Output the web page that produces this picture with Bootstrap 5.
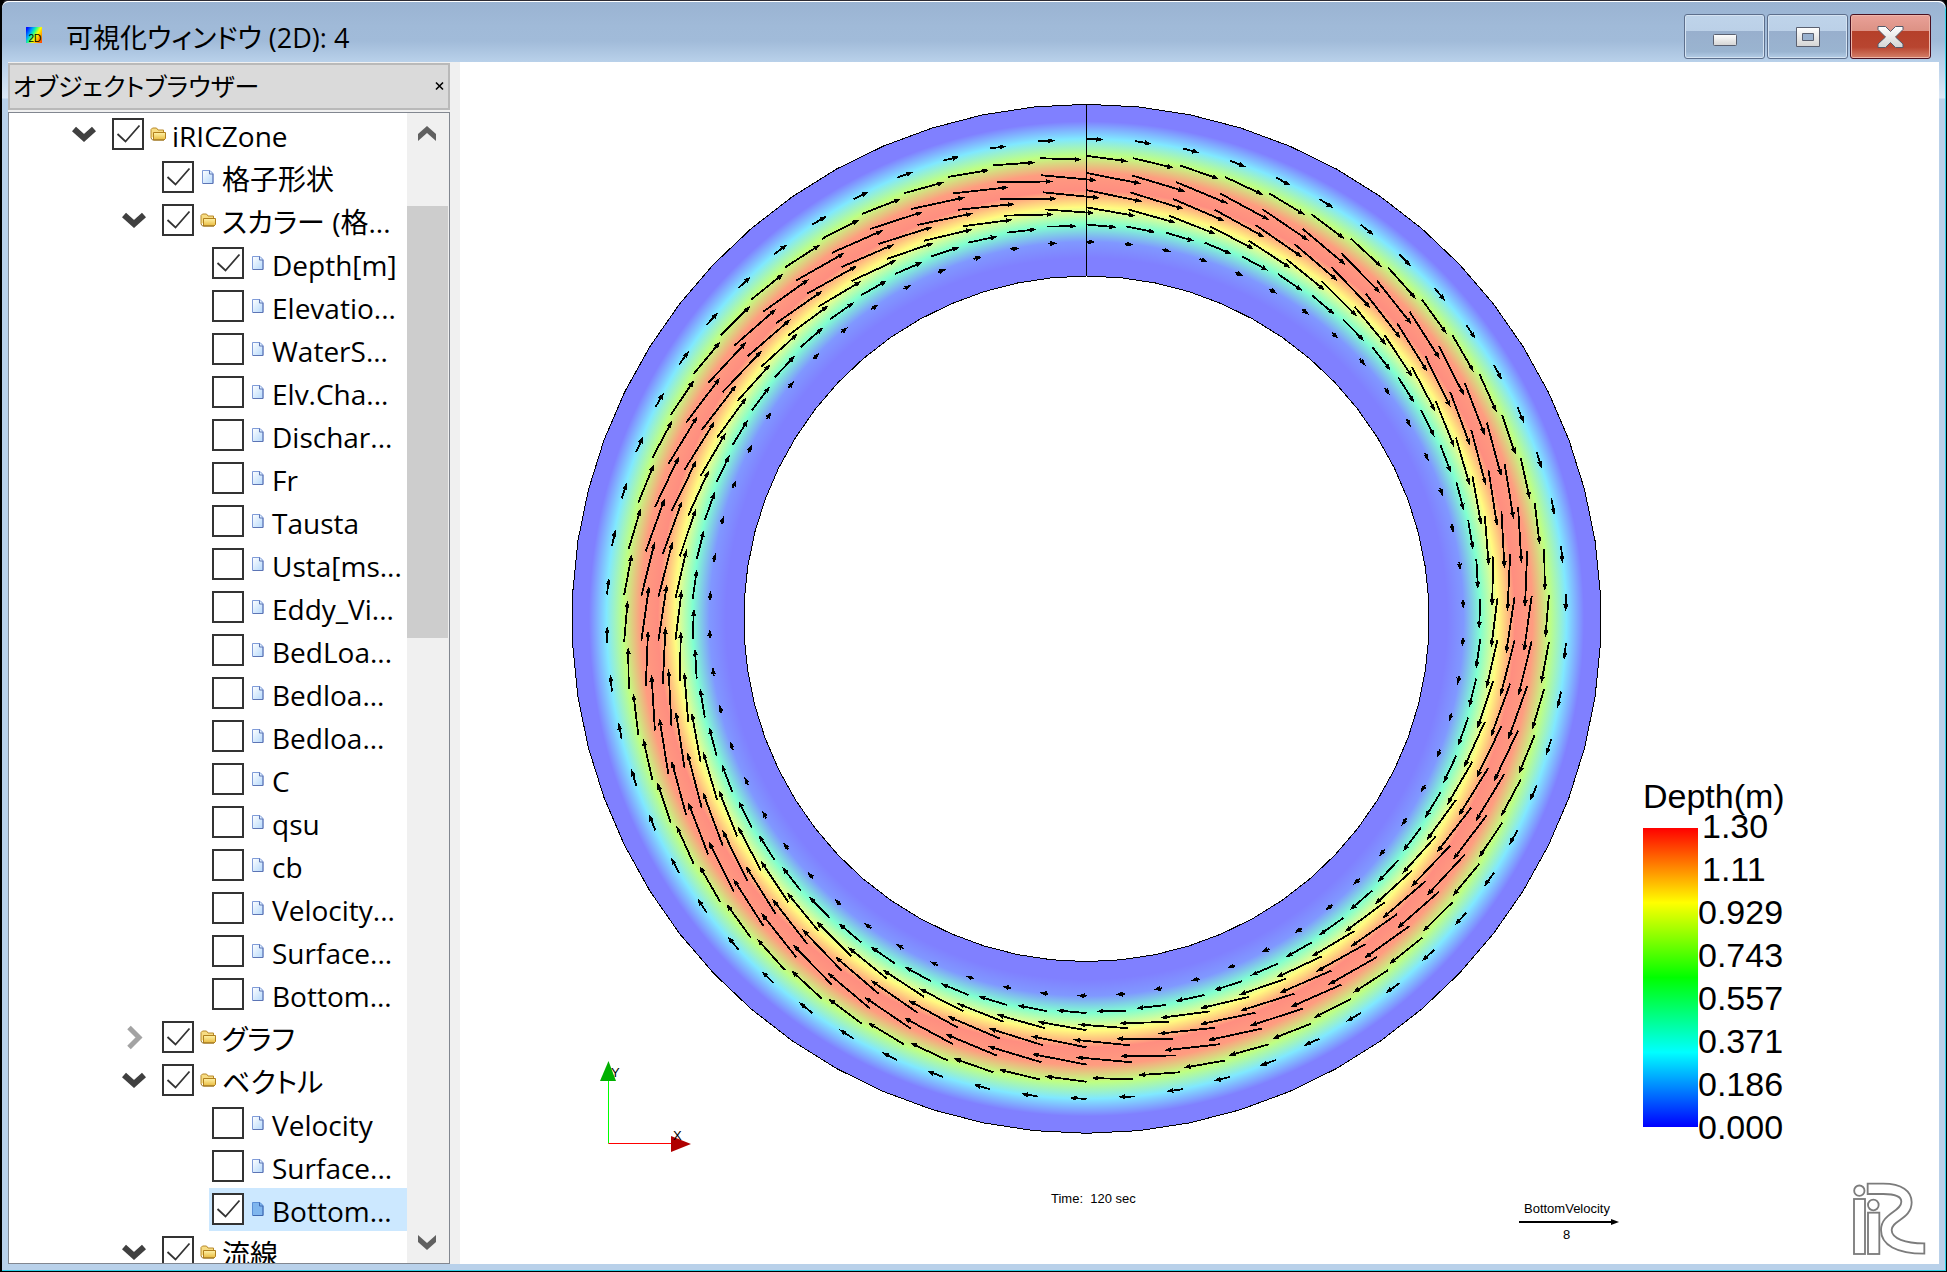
<!DOCTYPE html>
<html lang="ja">
<head>
<meta charset="utf-8">
<meta name="viewport" content="width=device-width, initial-scale=1">
<title>可視化ウィンドウ (2D): 4</title>
<link rel="stylesheet" href="https://cdn.jsdelivr.net/npm/bootstrap@5.3.0/dist/css/bootstrap.min.css">
<style>
body{font-family:"Open Sans","Noto Sans CJK JP",sans-serif;color:#000;font-feature-settings:"palt";background:#000}
.win{border:1px solid #000;border-left-width:2px;border-top-color:#2c2a33;border-top-left-radius:8px;border-top-right-radius:8px;background:linear-gradient(#b9d1ea 62px,#dbe8f6 97px,#b9d1ea 98px);box-shadow:inset 0 1px #fff,inset -1px -1px #2fd0e8}
.titlebar{height:61px;padding:9px 14px 0 24px;margin-right:1px;background:linear-gradient(#9ab3d2,#a0bad8 40%,#a1bbd9 65%,#b9d1ea);border-top:1px solid #fff;border-radius:7px 7px 0 0}
.title-ico{margin-bottom:3px}
.title-txt{font-size:27px;line-height:40px;margin-left:24px;padding-top:3px}
.wbtns{gap:2px}
.wbtn{width:81px;height:45px;padding:0;border:1px solid #5d6f8c;border-radius:3px;background:linear-gradient(#bfd4ea,#bbd0e7 38%,#98afcd 38%,#9ab4d0 85%,#b4cde6);box-shadow:inset 0 0 0 1px #d5e3f2}
.wbtn.shut{border-color:#4a1020;background:linear-gradient(#e9a198,#dc9184 38%,#b5402a 38%,#b84530 75%,#d47f69);box-shadow:inset 0 0 0 1px #edb5a9}
.client{margin:0 7px 7px 6px;background:#f0f0f0;min-height:0}
.dock{width:442px;margin:1px 10px 0 0}
.dock-head{height:47px;border:2px solid #b9b9b9;background:#dadada;padding:0 3px;margin-bottom:2px}
.dock-head h1{font-size:25px;line-height:36px}
.xbtn{width:14px;height:14px}
.tree{border:1px solid #828790;background:#fff;min-height:0}
.node{height:43px;font-size:28px;line-height:43px;white-space:nowrap}
.d0{padding-left:63px}.d1{padding-left:113px}.d2{padding-left:163px}
.exp{width:24px;height:43px;margin-right:16px;flex:none}
.chk{appearance:none;width:32px;height:32px;border:2px solid #333;background:#fff;flex:none;margin:0 0 1px}
.chk:checked{background:#fff url("data:image/svg+xml,%3Csvg xmlns='http://www.w3.org/2000/svg' viewBox='0 0 28 28'%3E%3Cpath d='M3.500 14l8 7.500L25.500 5.500' fill='none' stroke='%23333' stroke-width='1.800'/%3E%3C/svg%3E")}
.ico{width:16px;height:16px;margin:0 6px;flex:none}
.node label{padding-top:4px}
.picked{background:linear-gradient(90deg,transparent 200px,#cce8ff 200px)}
.sbar{width:42px;background:#f0f0f0}
.sbtn{height:40px;width:40px}
.thumb{width:41px;height:432px;margin-top:53px;background:#cdcdcd}
.scene{background:#fff;min-width:0}
.legend-box{right:154px;top:716px;width:142px;font-family:"Liberation Sans",sans-serif}
.legend-title{font-size:34px;line-height:36px;height:50px}
.ramp{width:55px;height:299px;background:linear-gradient(red,#ff0 25%,#0f0 50%,#0ff 75%,#00f)}
.ticks{font-size:34px;line-height:43px;margin-top:-23px}
.vtk{font-family:"Liberation Sans",sans-serif;font-size:13px}
</style>
<script src="https://cdn.jsdelivr.net/npm/bootstrap@5.3.0/dist/js/bootstrap.bundle.min.js"></script>
</head>
<body>
<svg width="0" height="0" class="position-absolute" aria-hidden="true">
 <defs>
  <linearGradient id="gf" x1="0" y1="0" x2="0" y2="1"><stop offset="0" stop-color="#fff3a8"/><stop offset="1" stop-color="#e8b93c"/></linearGradient>
  <linearGradient id="gp" x1="0" y1="0" x2="1" y2="1"><stop offset="0" stop-color="#fff"/><stop offset="1" stop-color="#b4d8fb"/></linearGradient>
  <linearGradient id="gb" x1="0" y1="0" x2="0" y2="1"><stop offset="0" stop-color="#fff"/><stop offset="1" stop-color="#d4d4d4"/></linearGradient>
  <linearGradient id="g2d" x1="0" y1=".2" x2="1" y2=".8"><stop offset="0" stop-color="#0010ff"/><stop offset=".25" stop-color="#00a0ff"/><stop offset=".42" stop-color="#20ff90"/><stop offset=".62" stop-color="#ff0"/><stop offset="1" stop-color="#ff5000"/></linearGradient>
 </defs>
 <symbol id="folder" viewBox="0 0 16 16"><path d="M1 12V3.500L2.500 2h4l1.500 2h5.500v2" fill="#f7dc83" stroke="#b8892a"/><path d="M3.500 6.500h12v6l-1.500 1.500H3.500z" fill="url(#gf)" stroke="#b07f1c"/><path d="M1 12l1.500 2H14" fill="none" stroke="#9a7424"/></symbol>
 <symbol id="page" viewBox="0 0 16 16"><path d="M2.500 1.500h7.500l3 3v10H2.500z" fill="url(#gp)" stroke="#7f9bd8"/><path d="M9.500 1.500v3.500H13v9.500H3" fill="none" stroke="#5c74b4"/></symbol>
 <symbol id="page-on" viewBox="0 0 16 16"><path d="M2.500 1.500h7.500l3 3v10H2.500z" fill="#7fb6ee" stroke="#5b8fd6"/><path d="M9.500 1.500v3.500H13v9.500H3" fill="none" stroke="#4069b0"/></symbol>
 <symbol id="down" viewBox="0 0 24 43"><path d="M2 16l10 9 10-9" fill="none" stroke="#404040" stroke-width="6"/></symbol>
 <symbol id="right" viewBox="0 0 24 43"><path d="M7 11.500l10 10-10 10" fill="none" stroke="#a3a3a3" stroke-width="5"/></symbol>
</svg>
<div class="win vh-100 d-flex flex-column overflow-hidden">
 <header class="titlebar d-flex align-items-center flex-shrink-0">
  <svg width="16" height="16" viewBox="0 0 16 16" class="title-ico flex-shrink-0"><path d="M0 0h16v16H0z" fill="url(#g2d)"/><text x="2.500" y="14.500" font-family="Liberation Sans" font-size="10">2D</text></svg>
  <span class="title-txt">可視化ウィンドウ (2D): 4</span>
  <div class="ms-auto d-flex wbtns">
   <button class="wbtn" type="button" aria-label="最小化"><svg width="24" height="24" viewBox="0 0 24 24"><rect x=".5" y="9.500" width="23" height="11" rx="1" fill="url(#gb)" stroke="#5a6070"/></svg></button>
   <button class="wbtn" type="button" aria-label="最大化"><svg width="24" height="24" viewBox="0 0 24 24"><path fill-rule="evenodd" d="M.5 2.500h23v19H.5zM6.500 8.500v7h11v-7z" fill="url(#gb)" stroke="#5a6070"/></svg></button>
   <button class="wbtn shut" type="button" aria-label="閉じる"><svg width="27" height="24" viewBox="0 0 27 24"><path d="M1 1.500h7.500l5 5 5-5H26v3L18.500 12l7.500 7v3.500h-7.500l-5-5-5 5H1V19l7.500-7L1 4.500z" fill="url(#gb)" stroke="#555a6a"/></svg></button>
  </div>
 </header>
 <div class="client d-flex flex-grow-1">
  <aside class="dock d-flex flex-column flex-shrink-0">
   <div class="dock-head d-flex align-items-center justify-content-between">
    <h1 class="m-0 fw-normal">オブジェクトブラウザー</h1>
    <button class="xbtn btn p-0 border-0 d-flex align-items-center justify-content-end" type="button" aria-label="パネルを閉じる"><svg width="10" height="10" viewBox="0 0 10 10"><path d="M1 1.500l7 7M8 1.500l-7 7" stroke="#000" stroke-width="1.600"/></svg></button>
   </div>
   <div class="tree d-flex flex-grow-1">
    <div id="nodes" class="flex-grow-1 overflow-hidden"></div>
    <div class="sbar d-flex flex-column flex-shrink-0">
     <button class="sbtn btn p-0 border-0 rounded-0" type="button" aria-label="上へ"><svg width="20" height="20" viewBox="0 0 20 20"><path d="M1 10l9-8 9 8v7l-9-8-9 8z" fill="#606060"/></svg></button>
     <div class="thumb"></div>
     <button class="sbtn btn p-0 border-0 rounded-0 mt-auto" type="button" aria-label="下へ"><svg width="20" height="20" viewBox="0 0 20 20"><path d="M1 0l9 8 9-8v7l-9 8-9-8z" fill="#606060"/></svg></button>
    </div>
   </div>
  </aside>
  <main class="scene flex-grow-1 position-relative overflow-hidden">
   <svg class="w-100 h-100 d-block" viewBox="460 62 1479 1202" role="img" aria-label="Depth / BottomVelocity">
    <defs>
     <radialGradient id="depth" gradientUnits="userSpaceOnUse" cx="1086.500" cy="618.800" r="515">
      <stop offset=".7" stop-color="#8080ff"/><stop offset=".732" stop-color="#8098ff"/><stop offset=".765" stop-color="#80ffd0"/><stop offset=".799" stop-color="#fffc80"/><stop offset=".832" stop-color="#ff8e80"/><stop offset=".866" stop-color="#ff9c80"/><stop offset=".899" stop-color="#c0ff80"/><stop offset=".932" stop-color="#80e8ff"/><stop offset=".966" stop-color="#8080ff"/>
     </radialGradient>
    </defs>
    <g id="field"></g>
    <g>
     <path d="M608.500 1143.500V1080" stroke="#0f0" fill="none"/><path d="M608.500 1061l7.500 20h-16z" fill="#00b000"/>
     <path d="M608.500 1143.500H672" stroke="red" fill="none"/><path d="M691 1144l-20 8v-16z" fill="#b00000"/>
     <text class="vtk" x="611" y="1077">Y</text><text class="vtk" x="673" y="1140">X</text>
    </g>
    <text class="vtk" x="1051" y="1203" xml:space="preserve">Time:  120 sec</text>
    <g>
     <text class="vtk" x="1524" y="1213">BottomVelocity</text>
     <path d="M1519 1222h92" stroke="#000" stroke-width="2"/><path d="M1611 1219v6l8-3z"/>
     <text class="vtk" x="1563" y="1239">8</text>
    </g>
    <g transform="translate(1600 760) scale(.33333)" fill="#fff" stroke="#7c7c7c" stroke-width="5.500">
     <circle cx="778" cy="1292" r="15.500"/><rect x="762" y="1317" width="33" height="165"/>
     <circle cx="820" cy="1335" r="16"/><rect x="804" y="1358" width="34" height="124"/>
     <path d="M803 1271H850C905 1271 935 1293 935 1327C935 1378 875 1380 875 1410C875 1435 915 1450 973 1450V1481C890 1481 843 1455 843 1410C843 1360 904 1355 904 1325C904 1310 890 1302 850 1302H803Z"/>
    </g>
   </svg>
   <div class="legend-box position-absolute">
    <div class="legend-title">Depth(m)</div>
    <div class="d-flex">
     <div class="ramp"></div>
     <div class="ticks"><div class="ps-1">1.30</div><div class="ps-1">1.11</div><div>0.929</div><div>0.743</div><div>0.557</div><div>0.371</div><div>0.186</div><div>0.000</div></div>
    </div>
   </div>
  </main>
 </div>
</div>
<script>
// [depth, label, checked, expander, selected]
const items=[[0,'iRICZone',1,'down'],[1,'格子形状',1],[1,'スカラー (格...',1,'down'],[2,'Depth[m]',1],[2,'Elevatio...'],[2,'WaterS...'],[2,'Elv.Cha...'],[2,'Dischar...'],[2,'Fr'],[2,'Tausta'],[2,'Usta[ms...'],[2,'Eddy_Vi...'],[2,'BedLoa...'],[2,'Bedloa...'],[2,'Bedloa...'],[2,'C'],[2,'qsu'],[2,'cb'],[2,'Velocity...'],[2,'Surface...'],[2,'Bottom...'],[1,'グラフ',1,'right'],[1,'ベクトル',1,'down'],[2,'Velocity'],[2,'Surface...'],[2,'Bottom...',1,'',1],[1,'流線',1,'down']];
document.getElementById('nodes').innerHTML=items.map(([d,t,c,e,s],i)=>
 `<div class="node d${d} d-flex align-items-center${s?' picked':''}">`+
 `<svg class="exp">${e?`<use href="#${e}"/>`:''}</svg>`+
 `<input class="chk" type="checkbox" id="n${i}"${c?' checked':''}>`+
 `<svg class="ico"><use href="#${e?'folder':s?'page-on':'page'}"/></svg><label for="n${i}">${t}</label></div>`).join('');

// annular channel: 62 x 10 grid, velocity arrows on every inner node
const N=62,CX=1086.5,CY=618.8,R=514.5,DR=17.17,step=2*Math.PI/N;
const ring=r=>Array.from({length:N},(_,n)=>(CX+r*Math.sin(n*step)).toFixed(1)+' '+(CY-r*Math.cos(n*step)).toFixed(1)).join('L');
let h=`<path d="M${ring(R)}ZM${ring(R-10*DR)}Z" fill="url(#depth)" fill-rule="evenodd" stroke="#000" shape-rendering="crispEdges"/><path d="M${CX} ${CY-R}v${10*DR}" stroke="#000"/>`;
// ring index: [arrow length, deviation from the tangent in degrees]
const vel={2:[17,4],3:[42,7.7],4:[56,11],5:[57,11.5],6:[50,10],7:[30,5.3],8:[9,3]};
let shafts='',heads='';
for(let n=0;n<N;n++)for(const k in vel){
 const r=R-k*DR,a=n*step,[len,dev]=vel[k],b=a+dev*Math.PI/180;
 const x=CX+r*Math.sin(a),y=CY-r*Math.cos(a),dx=Math.cos(b),dy=Math.sin(b);
 const p=(s,w)=>(x+dx*s-dy*w).toFixed(1)+' '+(y+dy*s+dx*w).toFixed(1);
 const hl=Math.min(7,len-2);
 shafts+=`M${p(0,0)}L${p(len-3,0)}`;
 heads+=`M${p(len,0)}L${p(len-hl,2.5)}L${p(len-hl,-2.5)}Z`;
}
h+=`<g shape-rendering="crispEdges"><path d="${shafts}" stroke="#000" stroke-width="1.8" fill="none"/><path d="${heads}"/></g>`;
document.getElementById('field').innerHTML=h;
</script>
</body>
</html>
